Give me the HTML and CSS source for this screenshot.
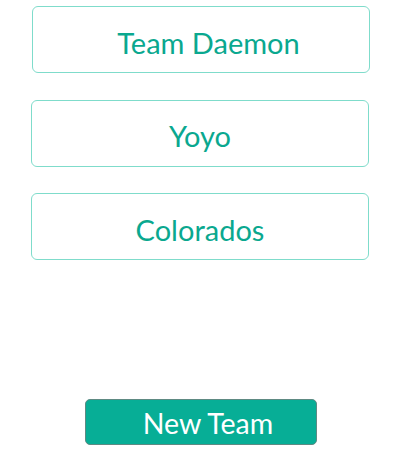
FILE: index.html
```html
<!DOCTYPE html>
<html>
<head>
<meta charset="utf-8">
<link rel="stylesheet" href="styles.css">
</head>
<body>
<main class="page">
  <ul class="teams">
    <li class="team team-first shifted">Team Daemon</li>
    <li class="team">Yoyo</li>
    <li class="team">Colorados</li>
  </ul>
  <button class="new-team" type="button">New Team</button>
</main>
</body>
</html>
```
FILE: styles.css
```css
html, body { margin: 0; padding: 0; background: #fff; }
body { width: 400px; height: 466px; overflow: hidden; font-family: Lato, "Open Sans", sans-serif; }
.page { display: flex; flex-direction: column; height: 466px; box-sizing: border-box; padding: 6px 0 21px 31px; }
.teams { list-style: none; margin: 0; padding: 0; display: flex; flex-direction: column; gap: 26.5px; }
.team {
  box-sizing: border-box;
  width: 338px;
  height: 67px;
  border: 1px solid #7fdccb;
  border-radius: 6px;
  display: flex;
  align-items: center;
  justify-content: center;
  padding-top: 5px;
  font-size: 29px;
  color: #0aa88f;
}
.team-first { margin-left: 1px; }
.shifted { padding-left: 15px; }
.new-team {
  margin-top: auto;
  margin-left: 54px;
  box-sizing: border-box;
  width: 232px;
  height: 46px;
  background: #07ae96;
  border: 1px solid #5e8a83;
  border-radius: 5px;
  color: #fff;
  font-family: Lato, "Open Sans", sans-serif;
  font-size: 28.5px;
  line-height: 1;
  padding: 2px 0 0 14px;
  display: flex;
  align-items: center;
  justify-content: center;
}
```
